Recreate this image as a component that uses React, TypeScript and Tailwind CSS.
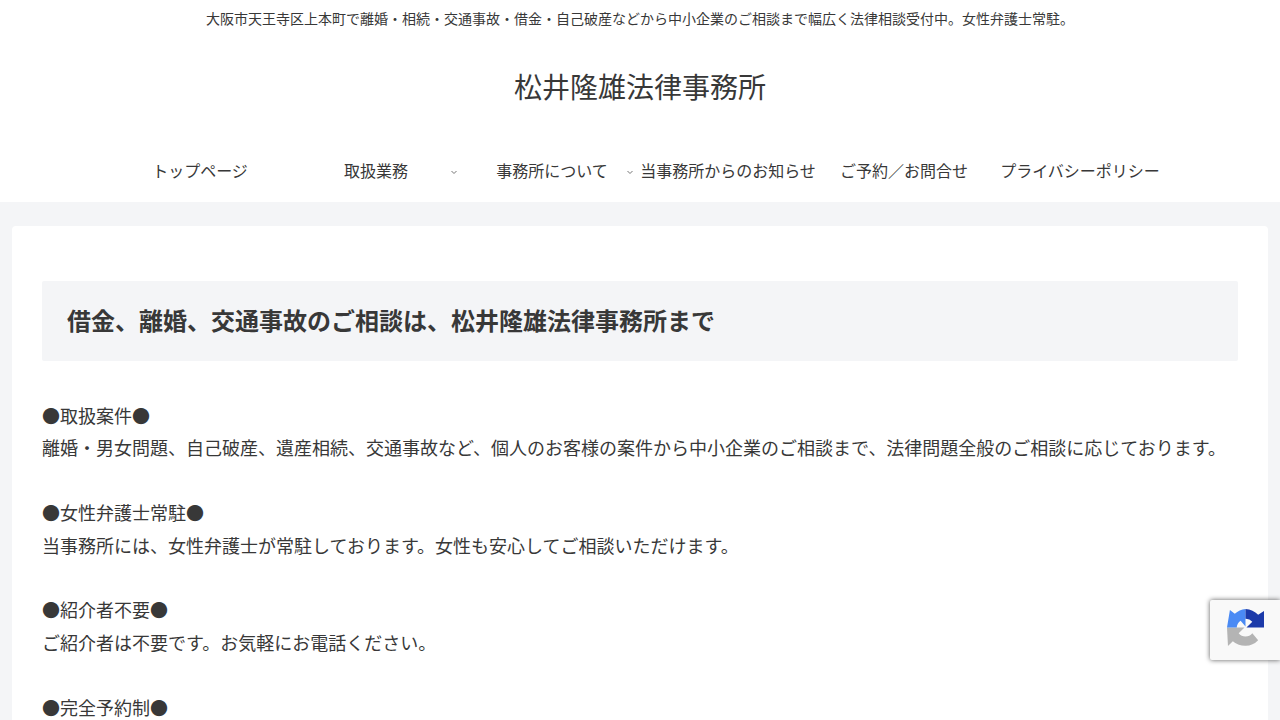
const navItems = [
  { label: 'トップページ' },
  { label: '取扱業務', caret: true },
  { label: '事務所について', caret: true },
  { label: '当事務所からのお知らせ' },
  { label: 'ご予約／お問合せ' },
  { label: 'プライバシーポリシー' },
];

const sections = [
  {
    title: '●取扱案件●',
    body: '離婚・男女問題、自己破産、遺産相続、交通事故など、個人のお客様の案件から中小企業のご相談まで、法律問題全般のご相談に応じております。',
  },
  {
    title: '●女性弁護士常駐●',
    body: '当事務所には、女性弁護士が常駐しております。女性も安心してご相談いただけます。',
  },
  {
    title: '●紹介者不要●',
    body: 'ご紹介者は不要です。お気軽にお電話ください。',
  },
  {
    title: '●完全予約制●',
    body: 'ご相談は完全予約制です。',
  },
];

function Caret({ className }: { className: string }) {
  return (
    <svg viewBox="0 0 8 8" className={className} fill="none" stroke="#777" strokeWidth="1">
      <path d="M1.5 3 L4 5.5 L6.5 3" />
    </svg>
  );
}

function RecaptchaBadge() {
  return (
    <div className="fixed right-0 top-[600px] h-[60px] w-[70px] rounded-l-[2px] bg-[#f9f9f9] pl-[17px] pt-[9px] shadow-[0_0_5px_rgba(0,0,0,0.65)]">
      <svg viewBox="0 0 38 38" className="h-[37px] w-[37px]">
        <path d="M0 19 H18 L12 25 A9 9 0 0 0 26 25 L32 32 A18.5 18.5 0 0 1 6 33 L1 38 Z" fill="#b4b4b4" />
        <path d="M3 1 L8 5 A19 19 0 0 1 19 0 V18 L14 12 A9 9 0 0 0 10 19 H0 Z" fill="#4a8af4" />
        <path d="M19 0 A19 19 0 0 1 32 6 L38 2 V19 H20 L26 13 A9 9 0 0 0 19 10 Z" fill="#1c3aa9" />
      </svg>
    </div>
  );
}

export default function App() {
  return (
    <div className="h-screen overflow-hidden bg-[#f4f5f7] font-['Noto_Sans_CJK_JP','Noto_Sans',sans-serif] text-[#383838]">
      <header className="bg-white">
        <p className="pt-[9px] text-center text-[14px] leading-[19px]">
          大阪市天王寺区上本町で離婚・相続・交通事故・借金・自己破産などから中小企業のご相談まで幅広く法律相談受付中。女性弁護士常駐。
        </p>
        <div className="pt-[37px] text-center text-[28px] leading-[42px]">松井隆雄法律事務所</div>
        <nav className="mt-[35px] flex h-[60px] justify-center">
          {navItems.map((item) => (
            <a key={item.label} className="relative flex h-[60px] w-[176px] items-center justify-center pb-[4px] text-[16px]">
              {item.label}
              {item.caret && <Caret className="absolute right-[6px] top-[26px] h-2 w-2" />}
            </a>
          ))}
        </nav>
      </header>
      <main className="mx-3 mt-6 rounded bg-white px-[30px] pt-[55px]">
        <h1 className="mb-[38px] rounded-[2px] bg-[#f4f5f7] px-[25px] pb-[21px] pt-[19px] text-[24px] font-bold leading-[40px]">
          借金、離婚、交通事故のご相談は、松井隆雄法律事務所まで
        </h1>
        <div className="text-[18px] leading-[32.4px]">
          {sections.map((s) => (
            <p key={s.title} className="mb-[32.4px]">
              {s.title}
              <br />
              {s.body}
            </p>
          ))}
        </div>
      </main>
      <RecaptchaBadge />
    </div>
  );
}
